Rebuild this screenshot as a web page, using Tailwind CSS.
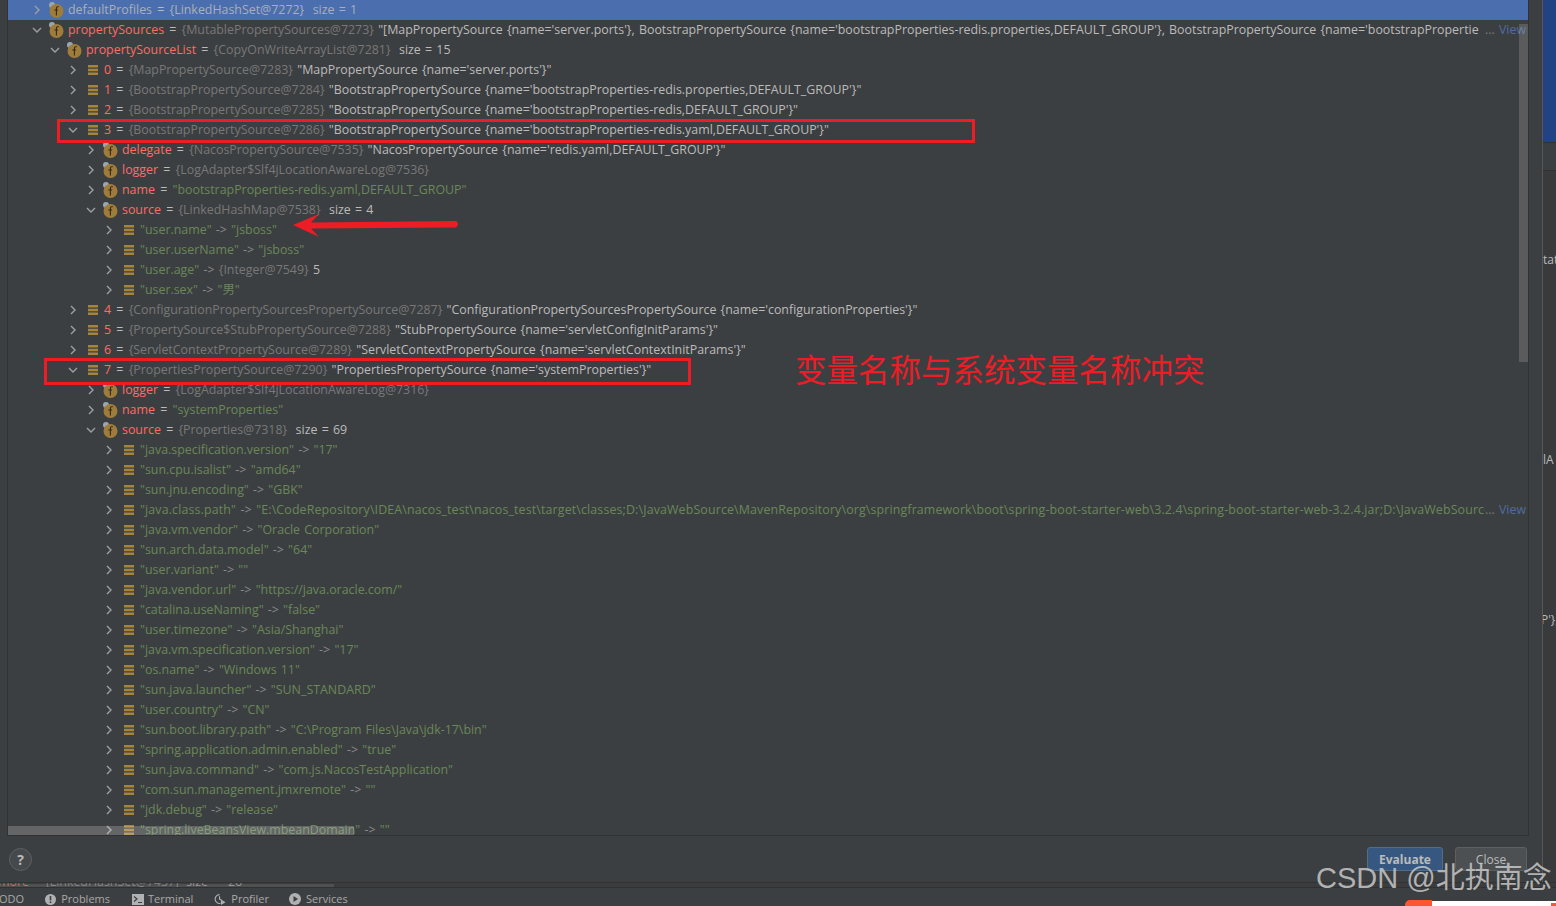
<!DOCTYPE html>
<html lang="en">
<head>
<meta charset="utf-8">
<title>Evaluate</title>
<script src="https://cdn.jsdelivr.net/npm/@tailwindcss/browser@4"></script>
</head>
<body class="bg-[#3c3f41] overflow-hidden">
<div class="relative w-[1556px] h-[906px] overflow-hidden font-['Open_Sans','Noto_Sans_CJK_SC',sans-serif] text-[12.4px] text-[#bbbbbb]">

  <div class="flex h-[882px]">
    <!-- dialog -->
    <div class="w-[1543px] bg-[#3c3f41] border-r border-[#555759] flex flex-col">
      <div class="relative ml-[7px] w-[1522px] h-[836px] border-l border-r border-b border-[#323232] overflow-hidden">
        <div id="tree" class="[word-spacing:1px]"></div>
        <div class="absolute right-0 top-[24px] w-[9px] h-[338px] bg-white/15"></div>
        <div class="absolute left-0 top-[826px] w-[346px] h-[9px] bg-white/20"></div>
      </div>
      <div class="flex items-center justify-between flex-1 pl-[9px] pr-[15px]">
        <div class="w-[23px] h-[23px] rounded-full bg-[#46494b] border border-[#5e6060] flex items-center justify-center font-bold text-[14px]">?</div>
        <div class="flex gap-[12px]">
          <button class="w-[76px] h-[24px] pt-[1px] rounded-[3px] bg-[#365880] border border-[#4c708c] font-bold text-[12px]">Evaluate</button>
          <button class="w-[72px] h-[24px] pt-[1px] rounded-[3px] bg-[#4c5052] border border-[#5e6060] text-[12px]">Close</button>
        </div>
      </div>
    </div>
    <!-- editor behind the dialog -->
    <div class="flex-1 flex flex-col bg-[#313335]">
      <div class="h-[143px] bg-[#214283] border-b border-[#323232]"></div>
      <div class="h-[28px] bg-[#3c3f41] border-b border-[#323232]"></div>
      <div class="relative flex-1 bg-[#383a3c] text-[12px] overflow-hidden">
        <span class="absolute left-0 top-[80px]">tat</span>
        <span class="absolute left-0 top-[280px]">lA</span>
        <span class="absolute -left-[2px] top-[440px]">P'},</span>
      </div>
    </div>
  </div>

  <!-- console peeking out under the dialog -->
  <div class="relative h-[5px] bg-[#3a3c3e] overflow-hidden border-t border-[#323232]">
    <div class="absolute left-[-2px] -top-[10px] whitespace-pre text-[#8a8a8a]"><span class="text-[#ff6b68]/70">more</span>     <span class="text-[#787878]">{LinkedHashSet@7437}</span>  size  =  26</div>
    <div class="absolute left-0 bottom-0 w-[334px] h-[3px] bg-white/10"></div>
  </div>

  <!-- tool window bar -->
  <div class="h-[19px] bg-[#3c3f41] border-t border-[#2f3133] flex items-center pt-[4px] text-[11px] text-[#a9a9a9] overflow-hidden">
    <span class="ml-[-7px]">TODO</span>
    <span class="flex items-center gap-[5px] ml-[21px]">
      <svg width="11" height="11" viewBox="0 0 11 11"><circle cx="5.5" cy="5.5" r="5.5" fill="#afb1b3"/><rect x="4.7" y="2" width="1.6" height="4.4" fill="#3c3f41"/><rect x="4.7" y="7.4" width="1.6" height="1.6" fill="#3c3f41"/></svg>
      Problems
    </span>
    <span class="flex items-center gap-[4px] ml-[22px]">
      <svg width="12" height="11" viewBox="0 0 12 11"><rect width="12" height="11" fill="#afb1b3"/><path d="M2 2.5 5 5 2 7.5M6 8.5h4" stroke="#3c3f41" stroke-width="1.2" fill="none"/></svg>
      Terminal
    </span>
    <span class="flex items-center gap-[5px] ml-[21px]">
      <svg width="12" height="13" viewBox="0 0 13 13"><path d="M6 1.2a4.8 4.8 0 1 0 1 9.5M6 3v3l2 1" stroke="#afb1b3" stroke-width="1.2" fill="none"/><path d="M7.5 6.5 12.5 9.500 7.5 12.500Z" fill="#afb1b3"/></svg>
      Profiler
    </span>
    <span class="flex items-center gap-[5px] ml-[20px]">
      <svg width="12" height="12" viewBox="0 0 12 12"><circle cx="6" cy="6" r="6" fill="#afb1b3"/><path d="M4.5 3 9 6 4.5 9Z" fill="#3c3f41"/></svg>
      Services
    </span>
  </div>

  <!-- annotations drawn over the screenshot -->
  <div class="absolute left-[57px] top-[119px] w-[918px] h-[24px] border-[3px] border-[#ee1c25]"></div>
  <div class="absolute left-[44px] top-[358px] w-[647px] h-[27px] border-[3px] border-[#ee1c25]"></div>
  <svg class="absolute left-[290px] top-[210px]" width="175" height="32" viewBox="0 0 175 32">
    <path d="M3 15 29 4 21 12.500 166 11Q170 14 166 17.500L21 18.500 29 27Z" fill="#ee1c25"/>
  </svg>
  <div class="absolute left-[795px] top-[347px] text-[#ee1c25] text-[31.500px] leading-[42px] whitespace-nowrap font-['Noto_Sans_CJK_SC',sans-serif]">变量名称与系统变量名称冲突</div>

  <!-- watermark -->
  <div class="absolute left-[1316px] top-[858px] text-[#c8c8c8]/85 text-[29px] leading-[40px] whitespace-nowrap font-['Liberation_Sans','Noto_Sans_CJK_SC',sans-serif]">CSDN @北执南念</div>

  <!-- corner of the page behind -->
  <div class="absolute left-[1432px] top-[901px] w-[124px] h-[5px] bg-white"></div>
  <div class="absolute left-[1405px] top-[900px] w-[27px] h-[6px] bg-[#fc5531] rounded-tl-[5px]"></div>
  <div class="absolute left-[1551px] top-[903px] w-[5px] h-[3px] bg-[#fc5531]"></div>
</div>

<script>
  const sources = [
    ["f", 0, false, "defaultProfiles", "{LinkedHashSet@7272}", null, "size = 1"],
    ["f", 0, true, "propertySources", "{MutablePropertySources@7273}", "\"[MapPropertySource {name='server.ports'}, BootstrapPropertySource {name='bootstrapProperties-redis.properties,DEFAULT_GROUP'}, BootstrapPropertySource {name='bootstrapPropertie", null, true],
    ["f", 1, true, "propertySourceList", "{CopyOnWriteArrayList@7281}", null, "size = 15"],
    ["l", 2, false, "0", "{MapPropertySource@7283}", "\"MapPropertySource {name='server.ports'}\""],
    ["l", 2, false, "1", "{BootstrapPropertySource@7284}", "\"BootstrapPropertySource {name='bootstrapProperties-redis.properties,DEFAULT_GROUP'}\""],
    ["l", 2, false, "2", "{BootstrapPropertySource@7285}", "\"BootstrapPropertySource {name='bootstrapProperties-redis,DEFAULT_GROUP'}\""],
    ["l", 2, true, "3", "{BootstrapPropertySource@7286}", "\"BootstrapPropertySource {name='bootstrapProperties-redis.yaml,DEFAULT_GROUP'}\""],
    ["f", 3, false, "delegate", "{NacosPropertySource@7535}", "\"NacosPropertySource {name='redis.yaml,DEFAULT_GROUP'}\""],
    ["f", 3, false, "logger", "{LogAdapter$Slf4jLocationAwareLog@7536}"],
    ["s", 3, false, "name", "\"bootstrapProperties-redis.yaml,DEFAULT_GROUP\""],
    ["f", 3, true, "source", "{LinkedHashMap@7538}", null, "size = 4"],
    ["m", 4, "\"user.name\"", "\"jsboss\""],
    ["m", 4, "\"user.userName\"", "\"jsboss\""],
    ["i", 4, "\"user.age\"", "{Integer@7549}", "5"],
    ["m", 4, "\"user.sex\"", "\"男\""],
    ["l", 2, false, "4", "{ConfigurationPropertySourcesPropertySource@7287}", "\"ConfigurationPropertySourcesPropertySource {name='configurationProperties'}\""],
    ["l", 2, false, "5", "{PropertySource$StubPropertySource@7288}", "\"StubPropertySource {name='servletConfigInitParams'}\""],
    ["l", 2, false, "6", "{ServletContextPropertySource@7289}", "\"ServletContextPropertySource {name='servletContextInitParams'}\""],
    ["l", 2, true, "7", "{PropertiesPropertySource@7290}", "\"PropertiesPropertySource {name='systemProperties'}\""],
    ["f", 3, false, "logger", "{LogAdapter$Slf4jLocationAwareLog@7316}"],
    ["s", 3, false, "name", "\"systemProperties\""],
    ["f", 3, true, "source", "{Properties@7318}", null, "size = 69"],
    ["m", 4, "\"java.specification.version\"", "\"17\""],
    ["m", 4, "\"sun.cpu.isalist\"", "\"amd64\""],
    ["m", 4, "\"sun.jnu.encoding\"", "\"GBK\""],
    ["m", 4, "\"java.class.path\"", "\"E:\\CodeRepository\\IDEA\\nacos_test\\nacos_test\\target\\classes;D:\\JavaWebSource\\MavenRepository\\org\\springframework\\boot\\spring-boot-starter-web\\3.2.4\\spring-boot-starter-web-3.2.4.jar;D:\\JavaWebSource", true],
    ["m", 4, "\"java.vm.vendor\"", "\"Oracle Corporation\""],
    ["m", 4, "\"sun.arch.data.model\"", "\"64\""],
    ["m", 4, "\"user.variant\"", "\"\""],
    ["m", 4, "\"java.vendor.url\"", "\"https://java.oracle.com/\""],
    ["m", 4, "\"catalina.useNaming\"", "\"false\""],
    ["m", 4, "\"user.timezone\"", "\"Asia/Shanghai\""],
    ["m", 4, "\"java.vm.specification.version\"", "\"17\""],
    ["m", 4, "\"os.name\"", "\"Windows 11\""],
    ["m", 4, "\"sun.java.launcher\"", "\"SUN_STANDARD\""],
    ["m", 4, "\"user.country\"", "\"CN\""],
    ["m", 4, "\"sun.boot.library.path\"", "\"C:\\Program Files\\Java\\jdk-17\\bin\""],
    ["m", 4, "\"spring.application.admin.enabled\"", "\"true\""],
    ["m", 4, "\"sun.java.command\"", "\"com.js.NacosTestApplication\""],
    ["m", 4, "\"com.sun.management.jmxremote\"", "\"\""],
    ["m", 4, "\"jdk.debug\"", "\"release\""],
    ["m", 4, "\"spring.liveBeansView.mbeanDomain\"", "\"\""]
  ];

  const chevron = open => `<svg width="10" height="10" viewBox="0 0 10 10" class="shrink-0"><path d="${open ? 'M1 3 5 7 9 3' : 'M3 1 7 5 3 9'}" fill="none" stroke="#9da0a2" stroke-width="1.400"/></svg>`;
  const fieldIcon = `<svg width="16" height="16" viewBox="0 0 16 16" class="shrink-0"><circle cx="4" cy="3" r="3" fill="#9aa7b0"/><circle cx="8.500" cy="9" r="7" fill="#a07c3a"/><path d="M10.800 4.800Q8.400 4.200 8.400 6.500V13.500M6.300 8h3.800" fill="none" stroke="#2e2a20" stroke-width="1.100"/></svg>`;
  const listIcon = `<svg width="10" height="10" viewBox="0 0 10 10" class="shrink-0"><path d="M0 0h10v2.400H0zM0 3.800h10v2.400H0zM0 7.600h10V10H0z" fill="#a5843c"/></svg>`;
  const esc = s => s.replace(/&/g, "&amp;").replace(/</g, "&lt;");
  const eq = `<span class="mx-[1px]"> = </span>`;
  const arrow = `<span class="text-[#8a8a8a]"> -&gt; </span>`;
  const green = s => `<span class="text-[#6a8759]">${esc(s)}</span>`;
  const gray = (s, i) => `<span class="${i === 0 ? 'text-[#a9b0bb]' : 'text-[#787878]'}">${esc(s)}</span>`;
  const view = `<span class="shrink-0 pr-[2px] leading-[20px]"><span class="text-[#787878]">...</span> <span class="text-[#4f6d9e]">View</span></span>`;

  function rowHtml(r, i) {
    const kind = r[0], depth = r[1];
    const isEntry = kind === "m" || kind === "i";
    const isList = kind === "l" || isEntry;
    const open = isEntry ? false : r[2];
    let body = "", more = false;
    if (kind === "m") {
      body = green(r[2]) + arrow + green(r[3]);
      more = r[4];
    } else if (kind === "i") {
      body = green(r[2]) + arrow + gray(r[3]) + " " + r[4];
    } else {
      const nameClass = i === 0 ? "text-[#a9b0bb]" : "text-[#ff6b68]";
      body = `<span class="${nameClass}">${r[3]}</span>` + eq;
      if (kind === "s") body += green(r[4]);
      else {
        body += gray(r[4], i);
        if (r[5]) body += " " + esc(r[5]);
        if (r[6]) body += `<span class="${i === 0 ? 'text-[#a9b0bb]' : ''}">&nbsp; ${r[6]}</span>`;
        more = r[7];
      }
    }
    const bg = i === 0 ? "bg-[#4b6eaf]" : "";
    // the long class path runs a little wider in the original font
    const spacing = kind === "m" && more ? "tracking-[0.14px]" : "";
    return `<div class="flex items-center h-[20px] whitespace-pre overflow-hidden ${bg}" style="padding-left:${24 + depth * 18}px">
      <span class="w-[18px] shrink-0">${chevron(open)}</span>
      <span class="flex items-center shrink-0" style="margin-left:${isList ? 2 : -2}px;margin-right:${isList ? 6 : 4}px">${isList ? listIcon : fieldIcon}</span>
      <span class="flex-1 min-w-0 overflow-hidden leading-[20px] ${spacing}">${body}</span>${more ? view : ""}
    </div>`;
  }

  document.getElementById("tree").innerHTML = sources.map(rowHtml).join("");
</script>
</body>
</html>
